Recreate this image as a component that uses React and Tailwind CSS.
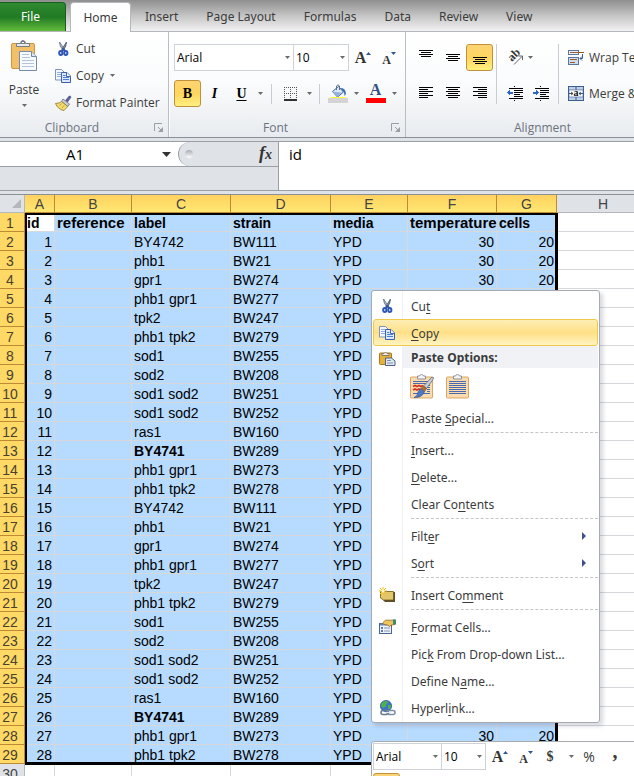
import React from 'react';

const tabs = ['Insert', 'Page Layout', 'Formulas', 'Data', 'Review', 'View'];

// id, label, strain
const samples = [
  [1, 'BY4742', 'BW111'],
  [2, 'phb1', 'BW21'],
  [3, 'gpr1', 'BW274'],
  [4, 'phb1 gpr1', 'BW277'],
  [5, 'tpk2', 'BW247'],
  [6, 'phb1 tpk2', 'BW279'],
  [7, 'sod1', 'BW255'],
  [8, 'sod2', 'BW208'],
  [9, 'sod1 sod2', 'BW251'],
  [10, 'sod1 sod2', 'BW252'],
  [11, 'ras1', 'BW160'],
  [12, 'BY4741', 'BW289'],
  [13, 'phb1 gpr1', 'BW273'],
  [14, 'phb1 tpk2', 'BW278'],
  [15, 'BY4742', 'BW111'],
  [16, 'phb1', 'BW21'],
  [17, 'gpr1', 'BW274'],
  [18, 'phb1 gpr1', 'BW277'],
  [19, 'tpk2', 'BW247'],
  [20, 'phb1 tpk2', 'BW279'],
  [21, 'sod1', 'BW255'],
  [22, 'sod2', 'BW208'],
  [23, 'sod1 sod2', 'BW251'],
  [24, 'sod1 sod2', 'BW252'],
  [25, 'ras1', 'BW160'],
  [26, 'BY4741', 'BW289'],
  [27, 'phb1 gpr1', 'BW273'],
  [28, 'phb1 tpk2', 'BW278'],
];

function App() {
  return (
    <div className="flex h-screen flex-col overflow-hidden bg-[#dfe3e8] font-['Open_Sans','Noto_Sans',sans-serif] text-xs text-[#3b3b3b]">
      <TabBar />
      <Ribbon />
      <FormulaBar />
      <Sheet />
    </div>
  );
}

function TabBar() {
  return (
    <nav className="flex h-8 shrink-0 items-end border-b border-[#b4b8bd] bg-linear-to-b from-[#8f8f8f] via-[#c4c4c4] to-[#f2f2f2] font-['Noto_Sans',sans-serif] whitespace-nowrap">
      <button className="h-[29px] w-[66px] shrink-0 rounded-tr-sm border-t border-r border-[#14601a] bg-linear-to-b from-[#2f8a30] via-[#1f7a24] to-[#62bb3c] pr-1 text-white">
        File
      </button>
      <button className="-mb-px ml-1 h-[30px] w-[61px] shrink-0 rounded-t-sm border border-b-0 border-[#b4b8bd] bg-white">
        Home
      </button>
      {tabs.map((tab) => (
        <button key={tab} className="h-[29px] shrink-0 px-3.5">
          {tab}
        </button>
      ))}
    </nav>
  );
}

function Caret({ className = 'text-[#6a6a6a]' }) {
  return (
    <svg width="5" height="3" viewBox="0 0 5 3" className={`shrink-0 ${className}`}>
      <path d="M0 0h5L2.5 3z" fill="currentColor" />
    </svg>
  );
}

function CaretButton({ label }) {
  return (
    <button aria-label={label} className="flex h-[27px] w-[11px] shrink-0 items-center justify-center">
      <Caret />
    </button>
  );
}

function Divider({ className = 'h-5' }) {
  return <span className={`w-px shrink-0 bg-[#c9cdd3] ${className}`} />;
}

function Group({ title, launcher, className, children }) {
  return (
    <section className={`relative flex shrink-0 flex-col border-r border-[#b9bdc4] ${className}`}>
      <div className="h-[87px]">{children}</div>
      <h2 className={`text-center leading-[18px] text-[#6b7380] ${launcher ? 'pr-6' : ''}`}>{title}</h2>
      {launcher && (
        <button aria-label={`${title} settings`} className="absolute right-1 bottom-1">
          <svg width="10" height="10" viewBox="0 0 10 10" fill="none" stroke="#9a9fa6">
            <path d="M.5 8V.5H8M4 4l3 3" />
            <path d="M9 4v5H4z" fill="#9a9fa6" stroke="none" />
          </svg>
        </button>
      )}
    </section>
  );
}

function Combo({ label, value, className }) {
  return (
    <div className={`relative shrink-0 ${className}`}>
      <select
        aria-label={label}
        defaultValue={value}
        className="h-full w-full appearance-none border border-[#cfd3d8] bg-white pl-0.5 text-black"
      >
        <option>{value}</option>
      </select>
      <Caret className="pointer-events-none absolute top-3 right-1 text-[#6a6a6a]" />
    </div>
  );
}

// "A" with a small blue arrow, used for grow / shrink font
function FontSizeButton({ grow, className }) {
  return (
    <button
      aria-label={grow ? 'Grow Font' : 'Shrink Font'}
      className={`flex h-[27px] shrink-0 items-center justify-center font-['Liberation_Serif',serif] font-bold text-[#333] ${className}`}
    >
      <span className={grow ? 'text-base leading-5' : 'pt-1 text-xs leading-5'}>A</span>
      <svg width="5" height="3" viewBox="0 0 5 3" className="mb-2 shrink-0">
        <path d={grow ? 'M0 3h5L2.5 0z' : 'M0 0h5L2.5 3z'} fill="#2f5597" />
      </svg>
    </button>
  );
}

function Ribbon() {
  return (
    <div className="flex h-[106px] shrink-0 overflow-hidden border-b border-[#8b9097] bg-linear-to-b from-white via-[#fafbfc] to-[#e8ebef] whitespace-nowrap">
      <Group title="Clipboard" launcher className="w-[169px]">
        <div className="flex">
          <button className="flex w-12 flex-col items-center pt-2">
            <PasteIcon />
            <span className="mt-2.5 leading-4">Paste</span>
            <Caret className="mt-1.5 text-[#6a6a6a]" />
          </button>
          <div className="flex flex-col items-start pt-[3px] pl-[7px]">
            <button className="flex h-[27px] items-center gap-1">
              <CutIcon />
              Cut
            </button>
            <button className="flex h-[27px] items-center gap-1">
              <CopyIcon />
              Copy
              <Caret className="ml-0.5 text-[#6a6a6a]" />
            </button>
            <button className="flex h-[27px] items-center gap-1">
              <PainterIcon />
              Format Painter
            </button>
          </div>
        </div>
      </Group>

      <Group title="Font" launcher className="w-[237px] border-l border-l-white">
        <div className="flex pt-3 pl-1">
          <Combo label="Font" value="Arial" className="h-[27px] w-[120px]" />
          <Combo label="Font size" value="10" className="-ml-px h-[27px] w-14" />
          <FontSizeButton grow className="w-7" />
          <FontSizeButton className="w-6" />
        </div>
        <div className="flex items-center pt-[9px] pl-1 font-['Liberation_Serif',serif] text-sm text-black">
          <button className="h-[27px] w-[27px] shrink-0 rounded-[3px] border border-[#c2903a] bg-linear-to-b from-[#fdd473] via-[#ffd55f] to-[#fff07f] font-bold">
            B
          </button>
          <button className="h-[27px] w-[27px] shrink-0 font-bold italic">I</button>
          <button className="h-[27px] w-[27px] shrink-0 font-bold underline underline-offset-2">U</button>
          <CaretButton label="Underline style" />
          <Divider className="mx-[5px] h-5" />
          <button aria-label="Borders" className="flex h-[27px] w-[27px] shrink-0 items-center justify-center">
            <svg width="13" height="14" viewBox="0 0 13 14">
              <path d="M0 .5h13M0 6.5h13M.5 0v12M6.5 0v12M12.5 0v12" stroke="#555" strokeDasharray="1 1" />
              <path d="M0 13h13" stroke="#000" strokeWidth="1.6" />
            </svg>
          </button>
          <CaretButton label="Border style" />
          <Divider className="mx-1 h-5" />
          <button aria-label="Fill Color" className="flex h-[27px] w-[27px] shrink-0 items-end justify-center pb-1">
            <BucketIcon />
          </button>
          <CaretButton label="Fill colours" />
          <button
            aria-label="Font Color"
            className="flex h-[27px] w-[27px] shrink-0 flex-col items-center justify-end pb-1"
          >
            <span className="text-base leading-4 font-bold text-[#2f4f85]">A</span>
            <span className="h-[5px] w-5 bg-[#ff0000]" />
          </button>
          <CaretButton label="Font colours" />
        </div>
      </Group>

      <Group title="Alignment" className="w-[274px]">
        <div className="flex pt-3 pl-[6px]">
          <div className="grid grid-cols-[27px_27px_27px] gap-y-[9px]">
            <LinesButton label="Top Align" y={4} rows={['full', 'mid', 'full', 'mid']} />
            <LinesButton label="Middle Align" y={8} rows={['full', 'mid', 'full', 'mid']} />
            <LinesButton label="Bottom Align" y={11} rows={['full', 'mid', 'full', 'mid']} active />
            <LinesButton label="Align Left" y={5} rows={['full', 'left', 'full', 'left', 'full', 'left']} />
            <LinesButton label="Center" y={5} rows={['full', 'mid', 'full', 'mid', 'full', 'mid']} />
            <LinesButton label="Align Right" y={5} rows={['full', 'right', 'full', 'right', 'full', 'right']} />
          </div>
          <Divider className="mx-[3px] h-[60px]" />
          <div className="pl-0.5">
            <button aria-label="Orientation" className="flex h-[27px] items-center gap-1 pl-1.5">
              <OrientationIcon />
              <Caret />
            </button>
            <div className="flex pt-[9px]">
              <button aria-label="Decrease Indent" className="flex h-[27px] w-[26px] items-center justify-center">
                <IndentIcon />
              </button>
              <button aria-label="Increase Indent" className="flex h-[27px] w-[26px] items-center justify-center">
                <IndentIcon right />
              </button>
            </div>
          </div>
          <Divider className="mr-[9px] ml-1 h-[60px]" />
          <div className="flex flex-col items-start gap-[9px]">
            <button className="flex h-[27px] items-center gap-[5px]">
              <WrapIcon />
              Wrap Text
            </button>
            <button className="flex h-[27px] items-center gap-[5px]">
              <MergeIcon />
              Merge &amp; Center
            </button>
          </div>
        </div>
      </Group>
    </div>
  );
}

const lineShapes = { full: 'h14', mid: 'm2 0h10', left: 'h9', right: 'm5 0h9' };

function LinesButton({ label, y, rows, active }) {
  return (
    <button
      aria-label={label}
      className={
        active
          ? 'flex h-[27px] w-[27px] items-center justify-center rounded-[3px] border border-[#c2903a] bg-linear-to-b from-[#fdd473] via-[#ffd55f] to-[#fff07f]'
          : 'flex h-[27px] w-[27px] items-center justify-center'
      }
    >
      <svg width="14" height="23" viewBox="0 0 14 23" className="shrink-0">
        {rows.map((row, i) => (
          <path
            key={i}
            d={`M0 ${y + 0.5 + i * 2}${lineShapes[row]}`}
            stroke="#000"
            shapeRendering="crispEdges"
          />
        ))}
      </svg>
    </button>
  );
}

function FormulaBar() {
  return (
    <div className="flex h-[53px] shrink-0 items-stretch pt-[3px]">
      <div className="w-[279px] shrink-0 border-y border-r border-[#9a9fa6]">
        <div className="flex h-[25px] border-b border-[#9a9fa6] bg-white">
          <input
            aria-label="Name Box"
            defaultValue="A1"
            className="w-[150px] min-w-0 bg-transparent text-center text-[15px] text-black"
          />
          <button aria-label="Names" className="flex flex-1 items-center justify-center pl-1">
            <svg width="9" height="5" viewBox="0 0 9 5">
              <path d="M0 0h9L4.5 5z" fill="#333" />
            </svg>
          </button>
          <div className="flex w-[100px] items-center justify-between rounded-l-full border-l border-[#9a9fa6] bg-[#dfe3e8] pr-1.5 pl-1.5">
            <span className="h-2 w-2 rounded-full bg-linear-to-b from-[#a9adb2] to-white" />
            <button
              aria-label="Insert Function"
              className="font-['Liberation_Serif',serif] text-lg leading-5 font-bold text-[#333] italic"
            >
              f<span className="text-sm">x</span>
            </button>
          </div>
        </div>
      </div>
      <textarea
        aria-label="Formula"
        defaultValue="id"
        className="min-w-0 flex-1 resize-none border-y border-[#9a9fa6] bg-white pt-0.5 pl-2.5 text-[15px] leading-5 text-black"
      />
    </div>
  );
}

const colHead =
  'border-r border-b border-[#c08a35] bg-linear-to-b from-[#ffd160] to-[#ffe872] p-0 text-center font-normal';
const cell = 'border-r border-b border-[#d6d8dc] bg-[#b7dbff] p-0 pt-0.5 pl-0.5';
const numCell = 'border-r border-b border-[#d6d8dc] bg-[#b7dbff] p-0 pt-0.5 pr-0.5 text-right';
const blank = 'border-b border-[#d6d8dc] bg-white p-0';

function RowHead({ children }) {
  return (
    <th
      scope="row"
      className="border-r border-b border-[#c08a35] bg-[#ffd965] p-0 pt-0.5 pr-1 text-center font-normal text-[#4a4030]"
    >
      {children}
    </th>
  );
}

function Sheet() {
  return (
    <main className="relative min-h-0 flex-1 pt-[3px]">
      <table className="w-full min-w-[649px] table-fixed border-separate border-spacing-0 border-t border-[#8b9097] font-['Liberation_Sans',Arial,sans-serif] text-sm leading-4 whitespace-nowrap text-black">
        <colgroup>
          <col className="w-[25px]" />
          <col className="w-[30px]" />
          <col className="w-[77px]" />
          <col className="w-[99px]" />
          <col className="w-[100px]" />
          <col className="w-[77px]" />
          <col className="w-[89px]" />
          <col className="w-[60px]" />
          <col />
        </colgroup>
        <thead>
          <tr className="h-[18px] text-[#444]">
            <td className="border-r border-b border-[#b4b8bd] bg-[#dfe3e8] p-0">
              <svg width="9" height="9" viewBox="0 0 9 9" className="ml-3">
                <path d="M9 0v9H0z" fill="#b4b8bd" />
              </svg>
            </td>
            {['A', 'B', 'C', 'D', 'E', 'F', 'G'].map((col) => (
              <th key={col} scope="col" className={colHead}>
                {col}
              </th>
            ))}
            <th scope="col" className="border-b border-[#b4b8bd] bg-[#dfe3e8] p-0 text-center font-normal">
              H
            </th>
          </tr>
        </thead>
        <tbody>
          <tr className="h-[19px] font-bold">
            <RowHead>1</RowHead>
            <td className="border-r border-b border-[#d6d8dc] bg-white p-0 pt-0.5 pl-0.5">id</td>
            <td className={`${cell} text-[15px]`}>reference</td>
            <td className={cell}>label</td>
            <td className={cell}>strain</td>
            <td className={cell}>media</td>
            <td className={`${cell} text-[15px]`}>temperature</td>
            <td className={cell}>cells</td>
            <td className={blank} />
          </tr>
          {samples.map(([id, label, strain]) => (
            <tr key={id} className="h-[19px]">
              <RowHead>{id + 1}</RowHead>
              <td className={numCell}>{id}</td>
              <td className={cell} />
              <td className={label === 'BY4741' ? `${cell} font-bold` : cell}>{label}</td>
              <td className={cell}>{strain}</td>
              <td className={cell}>YPD</td>
              <td className={numCell}>30</td>
              <td className={numCell}>20</td>
              <td className={blank} />
            </tr>
          ))}
          <tr className="h-[19px]">
            <th
              scope="row"
              className="border-r border-b border-[#b4b8bd] bg-[#dfe3e8] p-0 pt-0.5 pr-1 text-center font-normal text-[#444]"
            >
              30
            </th>
            {['A', 'B', 'C', 'D', 'E', 'F', 'G', 'H'].map((col) => (
              <td key={col} className="border-r border-b border-[#d6d8dc] bg-white p-0" />
            ))}
          </tr>
        </tbody>
      </table>

      {/* selection frame A1:G29 */}
      <div className="pointer-events-none absolute top-[22px] left-[25px] h-[552px] w-[533px] border-2 border-r-3 border-b-3 border-black" />

      <ContextMenu />
      <MiniToolbar />
    </main>
  );
}

function MenuItem({ icon, before = '', hot, after = '', arrow, active }) {
  return (
    <button
      role="menuitem"
      className={
        active
          ? 'flex h-[27px] w-full items-center rounded-[3px] border border-[#f0c94c] bg-linear-to-b from-[#fdeeb5] via-[#ffe086] to-[#fff3c0] text-left'
          : 'flex h-[27px] w-full items-center border border-transparent text-left'
      }
    >
      <span className="flex w-[37px] shrink-0 pl-[5px]">{icon}</span>
      <span className="flex-1 pt-0.5">
        {before}
        <span className="underline underline-offset-2">{hot}</span>
        {after}
      </span>
      {arrow && (
        <svg width="4" height="8" viewBox="0 0 4 8" className="mr-[11px]">
          <path d="M0 0l4 4-4 4z" fill="#3f4f8c" />
        </svg>
      )}
    </button>
  );
}

function MenuLine() {
  return (
    <div role="separator" className="h-[5px] pt-px pl-[38px]">
      <div className="border-t border-dashed border-[#c3c5c8]" />
    </div>
  );
}

function ContextMenu() {
  return (
    <div
      role="menu"
      className="absolute top-[99px] left-[371px] w-[229px] rounded-[3px] border border-[#a7abb0] bg-linear-to-r from-white from-[30px] via-[#e2e4e7] via-[30px] to-white to-[31px] p-px font-['Noto_Sans',sans-serif] shadow-[3px_3px_4px_rgba(60,60,100,0.2)]"
    >
      <MenuItem icon={<CutIcon />} before="Cu" hot="t" />
      <MenuItem icon={<CopyIcon />} hot="C" after="opy" active />
      <div className="flex h-[22px] items-center">
        <span className="w-[30px] shrink-0 pt-1 pl-1.5">
          <ClipboardIcon />
        </span>
        <h3 className="h-full flex-1 bg-[#f0f2f5] pl-2 leading-6 font-bold">Paste Options:</h3>
      </div>
      <div className="flex h-9 items-center gap-3 pl-[37px]">
        <button aria-label="Keep Source Formatting">
          <PasteOptionIcon brush />
        </button>
        <button aria-label="Match Destination Formatting">
          <PasteOptionIcon />
        </button>
      </div>
      <MenuItem before="Paste " hot="S" after="pecial..." />
      <MenuLine />
      <MenuItem hot="I" after="nsert..." />
      <MenuItem hot="D" after="elete..." />
      <MenuItem before="Clear Co" hot="n" after="tents" />
      <MenuLine />
      <MenuItem before="Filt" hot="e" after="r" arrow />
      <MenuItem before="S" hot="o" after="rt" arrow />
      <MenuLine />
      <MenuItem icon={<CommentIcon />} before="Insert Co" hot="m" after="ment" />
      <MenuLine />
      <MenuItem icon={<FormatCellsIcon />} hot="F" after="ormat Cells..." />
      <MenuItem before="Pic" hot="k" after=" From Drop-down List..." />
      <MenuItem before="Define N" hot="a" after="me..." />
      <MenuItem icon={<LinkIcon />} before="Hyperl" hot="i" after="nk..." />
    </div>
  );
}

function MiniToolbar() {
  return (
    <div className="absolute top-[550px] left-[371px] w-[290px] rounded-[3px] border border-[#a7abb0] bg-white p-px">
      <div className="flex">
        <Combo label="Mini font" value="Arial" className="h-[27px] w-[69px]" />
        <Combo label="Mini font size" value="10" className="-ml-px h-[27px] w-[45px]" />
        <FontSizeButton grow className="w-7" />
        <FontSizeButton className="w-6" />
        <button className="h-[27px] w-6 font-['Liberation_Serif',serif] text-sm font-bold">$</button>
        <span className="pl-1">
          <CaretButton label="Currencies" />
        </span>
        <button className="h-[27px] w-6 text-sm">%</button>
        <button className="h-[27px] w-7 pb-3 font-['Liberation_Serif',serif] text-xl leading-4 font-bold">,</button>
      </div>
      <div className="pt-[3px]">
        <button
          aria-label="Bold"
          className="h-[27px] w-[27px] rounded-[3px] border border-[#c2903a] bg-[#fdd473] font-['Liberation_Serif',serif] text-sm font-bold"
        >
          B
        </button>
      </div>
    </div>
  );
}

function PasteIcon() {
  return (
    <svg width="27" height="32" viewBox="0 0 27 32" className="shrink-0">
      <rect x=".5" y="3.5" width="23" height="25" rx="1.5" fill="#f2c069" stroke="#cf9640" />
      <path d="M5.5 6.5v-3h4c0-4 5-4 5 0h4v3z" fill="#e8eaed" stroke="#767c85" />
      <rect x="10.5" y="1.5" width="3" height="2" fill="#fff" stroke="#767c85" />
      <path d="M8.5 11.5h12l5 5v14h-17z" fill="#f6f9fd" stroke="#7489ab" />
      <path d="M20.5 11.5v5h5" fill="#dbe5f2" stroke="#7489ab" />
      <path d="M11 14.5h7M11 17.5h8M11 20.5h12M11 23.5h12M11 26.5h12" stroke="#b7c4d8" />
    </svg>
  );
}

function CutIcon() {
  return (
    <svg width="17" height="16" viewBox="0 0 17 16" fill="none" className="shrink-0">
      <path d="M4.5 1l.8 4L8.5 10l1.2-1.5z" fill="#b9c3d1" stroke="#66748a" strokeWidth=".9" />
      <path d="M11.5 1l-.8 4L8 10 6.8 8.5z" fill="#8592a3" stroke="#4d5a6c" strokeWidth=".9" />
      <ellipse cx="5.8" cy="12" rx="1.6" ry="2" stroke="#2c56b4" strokeWidth="2" />
      <ellipse cx="10.8" cy="12" rx="1.6" ry="2" stroke="#2c56b4" strokeWidth="2" />
      <path d="M7 10l1.4-2L10 10" stroke="#2c56b4" strokeWidth="1.6" />
    </svg>
  );
}

function CopyIcon() {
  return (
    <svg width="17" height="16" viewBox="0 0 17 16" className="shrink-0">
      <path d="M.5 1.5h6l2.5 2.5v8H.5z" fill="#f4f8fe" stroke="#7d95bf" />
      <path d="M2 4.5h4M2 6.5h5M2 8.5h5" stroke="#8faee0" />
      <path d="M6.5 4.5h5.5l3.5 3.5v6.5h-9z" fill="#dbe8fb" stroke="#3f62a8" />
      <path d="M11.5 4.5v4h4" fill="#fff" stroke="#3f62a8" />
      <path d="M8 7.5h2.5M8 9.5h6M8 11.5h6" stroke="#4f7fd0" />
    </svg>
  );
}

function PainterIcon() {
  return (
    <svg width="17" height="16" viewBox="0 0 17 16" className="shrink-0">
      <path d="M10.5 5.5L14 1.2q2-.8 1.8 1.3L12.5 7z" fill="#5b5f9c" stroke="#3e4175" strokeWidth=".6" />
      <path d="M8 4l6.5 5-1.8 2.5L6.5 6.5z" fill="#c9ccd4" stroke="#6a6d76" strokeWidth=".8" />
      <path d="M6.5 6.5l6.2 5L9 15.5Q3 14.5.5 8.5 4.5 8.5 6.5 6.5z" fill="#f3dc70" stroke="#8d7526" strokeWidth=".8" />
      <path d="M6.5 8.5l-2 2.5M9 10.5L7 13" stroke="#b5942b" strokeWidth=".8" />
    </svg>
  );
}

function BucketIcon() {
  return (
    <svg width="20" height="19" viewBox="0 0 20 19" className="shrink-0">
      <path d="M4.5 7.5l6-5 5 5.500-6 5z" fill="#dce8f6" stroke="#44618f" />
      <path d="M8.5 6V2q1.5-2.5 3 0v4" fill="none" stroke="#5b6f90" />
      <path d="M12.5 4q5-.5 5.5 6l-1.5 2q0-4-2-5z" fill="#3b6fb5" />
      <path d="M4.5 7.8l9 .8-4 4.1z" fill="#8fb2de" />
      <path d="M2 13.5h16" stroke="#ffff3c" />
      <rect y="14" width="20" height="5" fill="#d4d4d4" />
    </svg>
  );
}

function OrientationIcon() {
  return (
    <svg width="16" height="16" viewBox="0 0 16 16" className="shrink-0">
      <text
        x="0"
        y="0"
        transform="translate(4 12) rotate(-45)"
        fontFamily="Liberation Serif, serif"
        fontWeight="bold"
        fontSize="12"
        fill="#333"
      >
        ab
      </text>
      <path d="M6 14.5l8-8M10.5 6H14.5v4" fill="none" stroke="#666" />
    </svg>
  );
}

function IndentIcon({ right }) {
  return (
    <svg width="16" height="16" viewBox="0 0 16 16" shapeRendering="crispEdges">
      <path d="M2 2.5h14M8 4.5h8M8 6h8M8 8.5h5M8 10.5h8M2 12.5h14" stroke="#000" />
      <path d="M7.5 0v16" stroke="#000" strokeDasharray="1 1" />
      <path d={right ? 'M6 6.5L3 3.5v2H0v2h3v2z' : 'M0 6.5l3-3v2h3v2H3v2z'} fill="#2b66c8" />
    </svg>
  );
}

function WrapIcon() {
  return (
    <svg width="16" height="16" viewBox="0 0 16 16" className="shrink-0">
      <rect x=".5" y=".5" width="10" height="4" fill="#eef3fa" stroke="#5a74a3" />
      <path d="M2 2.5h14" stroke="#9c5f25" />
      <rect x=".5" y="7.5" width="10" height="7" fill="#cfdcee" stroke="#5a74a3" />
      <path d="M2 9.5h7M2 12.5h5" stroke="#9c5f25" />
      <path d="M14.5 4v4.5h-2.500M14 6.5l-2 2 2 2" fill="none" stroke="#3c5c99" />
    </svg>
  );
}

function MergeIcon() {
  return (
    <svg width="16" height="15" viewBox="0 0 16 15" className="shrink-0">
      <rect x=".5" y=".5" width="15" height="14" fill="#bccfe6" stroke="#3f5f94" />
      <path d="M8 1v3M8 11v3" stroke="#3f5f94" />
      <rect x="1" y="4" width="14" height="7" fill="#fff" stroke="#3f5f94" strokeWidth=".6" />
      <text x="8" y="10" textAnchor="middle" fontFamily="Liberation Serif, serif" fontWeight="bold" fontSize="10" fill="#111">
        a
      </text>
      <path d="M1 7.5h4M11 7.5h4M3 6l2 1.5L3 9M13 6l-2 1.5L13 9" fill="none" stroke="#1f3258" strokeWidth=".8" />
    </svg>
  );
}

function ClipboardIcon() {
  return (
    <svg width="17" height="16" viewBox="0 0 17 16">
      <rect x=".5" y="2" width="12" height="11.5" rx="1" fill="#e7b13a" stroke="#a87a1d" />
      <path d="M3 4.5v-2h2q1.5-3 3 0h2v2z" fill="#eee" stroke="#6d6a55" strokeWidth=".8" />
      <path d="M6.5 7h6l3.5 3v4.5H6.5z" fill="#dfe7f2" stroke="#50617f" />
      <path d="M8 9.5h4M8 12h6" stroke="#7d8fae" />
    </svg>
  );
}

function PasteOptionIcon({ brush }) {
  return (
    <svg width="24" height="25" viewBox="0 0 24 25" className="block">
      <rect x=".5" y="3" width="22" height="21" rx="1" fill="#fbdcae" stroke="#d9a765" />
      <path d="M7.5 5v-3h2q2-3.5 4 0h2v3z" fill="#f4f5f7" stroke="#8c929a" />
      <path d="M3 7.5h17M3 9.5h17M3 11.5h17M3 13.5h17M3 15.5h17M3 17.5h17M3 19.5h17" stroke="#4a69ae" />
      {brush && (
        <>
          <path d="M3 10h14v8H3z" fill="#fbdcae" />
          <path d="M3 12.5l2-1 2 1 2-1 2 1 2-1M3 16l2-1 2 1 2-1 2 1" fill="none" stroke="#d0301c" strokeWidth="1.6" />
          <path d="M22 3q2.5 0 1 2.5l-6.500 9-3-2.5z" fill="#c9ced6" stroke="#646b77" strokeWidth=".8" />
          <path d="M13.5 12l3 2.5-2 3-3.5-2.8z" fill="#a9713c" stroke="#6f4620" strokeWidth=".6" />
          <path d="M10.5 14.7l4 3Q12 24 4 23.5q4-2 4-5.5z" fill="#4d78c4" stroke="#2d508f" strokeWidth=".6" />
        </>
      )}
    </svg>
  );
}

function CommentIcon() {
  return (
    <svg width="17" height="16" viewBox="0 0 17 16">
      <path d="M1.5 4.5h13v8.5h-10l-3-2z" fill="#e3c66a" stroke="#8b7430" />
      <path d="M4 13h10.5V5h1.5v10H6z" fill="#5e4f26" />
      <path d="M4 0v8M0 4h8M1 1l6 6M7 1L1 7" stroke="#f4c21d" />
      <circle cx="4" cy="4" r="1.5" fill="#fffbd0" />
    </svg>
  );
}

function FormatCellsIcon() {
  return (
    <svg width="17" height="16" viewBox="0 0 17 16">
      <rect x=".5" y="4.5" width="12" height="10" fill="#edf3fb" stroke="#4a6494" />
      <path d="M1 5.5h11" stroke="#5f86c9" strokeWidth="2" />
      <path d="M2 9h2M2 12h2" stroke="#2d508f" strokeWidth="1.6" />
      <path d="M5 9h6M5 12h6" stroke="#8796ae" />
      <path d="M3.5 4l3-2.8h5L16 1v4.5l-3.5.5-2 1.5L8.5 6 5 5.5z" fill="#efc25a" stroke="#8f6a22" strokeWidth=".8" />
      <path d="M14 .5h3v5h-3z" fill="#3c8a72" />
    </svg>
  );
}

function LinkIcon() {
  return (
    <svg width="17" height="16" viewBox="0 0 17 16">
      <circle cx="7" cy="6" r="5.6" fill="#3d74c9" stroke="#24508f" strokeWidth=".7" />
      <path d="M3 3q2-2.5 5-2l1 2-2 1v2L4.5 8 2 6zM9 5l3 0-.5 3.5L9 9z" fill="#4fb347" />
      <rect x="2" y="10.5" width="7.5" height="4" rx="2" fill="none" stroke="#66788f" strokeWidth="1.5" />
      <rect x="8" y="10.5" width="8" height="4" rx="2" fill="none" stroke="#7d8ea5" strokeWidth="1.5" />
      <path d="M6 12.5h6" stroke="#dfe6ee" />
    </svg>
  );
}

export default App;
